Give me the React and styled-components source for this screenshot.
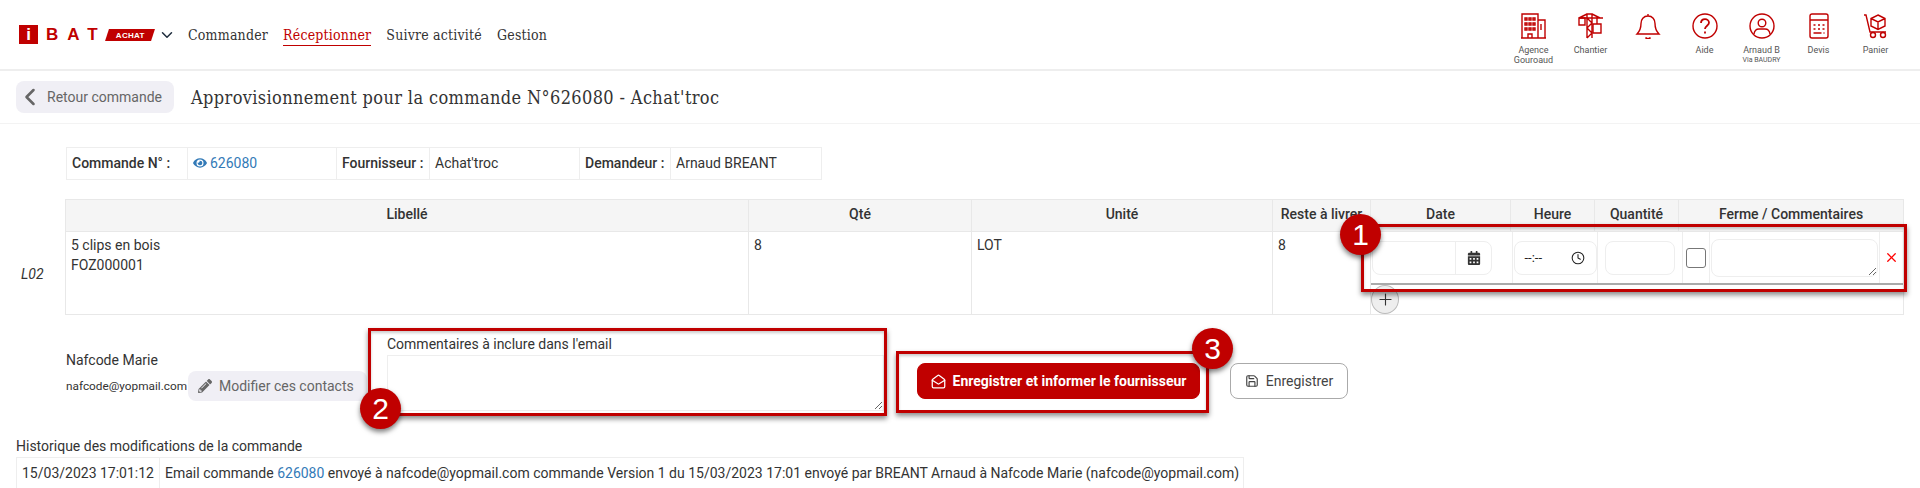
import React from "react";
import styled, { createGlobalStyle } from "styled-components";
import { ChevronDown, ChevronLeft, Clock, MailOpen, Plus, Save, X } from "lucide-react";
import { FaCalendarAlt, FaEye, FaPencilAlt } from "react-icons/fa";

const RED = "#c00000";
const SLAB = '"DejaVu Serif Condensed", "DejaVu Serif", serif';

const GlobalStyle = createGlobalStyle`
  html, body {
    margin: 0;
    height: 488px;
    overflow: hidden;
    background: #fff;
  }
  body {
    font-family: Roboto, "Liberation Sans", sans-serif;
    font-size: 14px;
    color: #333;
  }
  * {
    box-sizing: border-box;
  }
`;

const Page = styled.div`
  position: relative;
  width: 1920px;
  height: 488px;
  overflow: hidden;
`;

const Header = styled.header`
  display: flex;
  align-items: center;
  height: 71px;
  padding: 0 16px 0 19px;
  border-bottom: 2px solid #eee;
`;

const Logo = styled.div`
  display: flex;
  align-items: center;
  width: 169px;
  color: ${RED};
  font-family: "Liberation Sans", sans-serif;
  font-weight: 700;
`;

const LogoSquare = styled.span`
  display: flex;
  align-items: center;
  justify-content: center;
  width: 19px;
  height: 19px;
  background: ${RED};
  color: #fff;
  font-size: 17px;
`;

const LogoLetters = styled.span`
  margin-left: 8px;
  width: 61px;
  font-size: 17px;
  letter-spacing: 9px;
  white-space: nowrap;
`;

const LogoBadge = styled.span`
  display: flex;
  align-items: center;
  justify-content: center;
  width: 46px;
  height: 12px;
  background: ${RED};
  transform: skewX(-18deg);
  color: #fff;
  font-size: 8px;
  letter-spacing: 0.3px;
`;

const LogoBadgeText = styled.span`
  transform: skewX(18deg);
`;

const LogoChevron = styled(ChevronDown)`
  margin-left: 5px;
  color: #1f2d3d;
`;

const Nav = styled.nav`
  display: flex;
  gap: 15px;
  padding-top: 2px;
`;

const NavItem = styled.a`
  font-family: ${SLAB};
  font-size: 14px;
  letter-spacing: 0.2px;
  line-height: 20px;
  color: ${(p) => (p.$active ? RED : "#333")};
  border-bottom: 1px solid ${(p) => (p.$active ? RED : "transparent")};
`;

const Tools = styled.div`
  display: flex;
  align-self: flex-start;
  margin-left: auto;
  padding-top: 13px;
`;

const Tool = styled.div`
  display: flex;
  flex-direction: column;
  align-items: center;
  width: 57px;
  color: #555;
  font-size: 9px;
  line-height: 9.5px;
  text-align: center;
`;

const ToolIcon = styled.svg`
  width: 26px;
  height: 26px;
  margin-bottom: 7px;
  fill: none;
  stroke: ${RED};
  stroke-width: 1.4;
`;

const ToolSub = styled.span`
  display: block;
  font-size: 7px;
`;

const SubHeader = styled.div`
  display: flex;
  align-items: center;
  height: 53px;
  padding: 0 16px;
  border-bottom: 1px solid #f3f3f3;
`;

const GreyButton = styled.button`
  display: flex;
  align-items: center;
  border: 0;
  border-radius: 8px;
  background: #f0eff5;
  color: #666;
  font: 14px Roboto, sans-serif;
  white-space: nowrap;
`;

const BackButton = styled(GreyButton)`
  width: 158px;
  height: 32px;
  padding: 0;
  gap: 3px;
`;

const Title = styled.h1`
  margin: 0 0 0 17px;
  font-family: ${SLAB};
  font-size: 18px;
  font-weight: 400;
  letter-spacing: 0.37px;
  color: #333;
`;

const Content = styled.main`
  padding: 23px 16px 0;
`;

const InfoTable = styled.table`
  margin-left: 50px;
  width: 755px;
  height: 33px;
  border-collapse: collapse;
  table-layout: fixed;
`;

const InfoCell = styled.td`
  padding: 0 5px 2px;
  border: 1px solid #eee;
  font-weight: ${(p) => (p.$label ? 500 : 400)};
  white-space: nowrap;
`;

const Link = styled.a`
  color: #337ab7;
`;

const EyeIcon = styled(FaEye)`
  margin-right: 3px;
  vertical-align: -2px;
`;

const LineRow = styled.div`
  display: flex;
  align-items: flex-end;
  margin-top: 19px;
`;

const LineLabel = styled.div`
  display: flex;
  align-items: center;
  width: 50px;
  height: 83px;
  padding-left: 5px;
  font-style: italic;
`;

const LinesTable = styled.table`
  width: 1838px;
  border-collapse: collapse;
  table-layout: fixed;
`;

const Th = styled.th`
  height: 32px;
  padding: 0 0 3px;
  border: 1px solid #e8e8e8;
  background: #f5f5f5;
  font-weight: 500;
  white-space: nowrap;
`;

const Td = styled.td`
  height: 83px;
  padding: 3px 5px;
  border: 1px solid #e8e8e8;
  line-height: 20px;
  vertical-align: top;
`;

const EntryTd = styled(Td)`
  padding: 0;
`;

const EntryRow = styled.div`
  display: flex;
  height: 53px;
  border-bottom: 2px solid #aaa;
`;

const EntryCell = styled.div`
  display: flex;
  align-items: center;
  justify-content: ${(p) => p.$justify || "flex-start"};
  width: ${(p) => p.$w}px;
  padding-left: ${(p) => p.$pad || 0}px;
  border-left: ${(p) => (p.$first ? "none" : "1px solid #eee")};
`;

const DateGroup = styled.div`
  display: flex;
  width: 120px;
  height: 34px;
  border: 1px solid #eee;
  border-radius: 8px;
`;

const DateInput = styled.div`
  flex: 1;
  border-right: 1px solid #eee;
`;

const DateAddon = styled.div`
  display: flex;
  align-items: center;
  justify-content: center;
  width: 35px;
  color: #333;
`;

const TimeField = styled.div`
  display: flex;
  align-items: center;
  justify-content: space-between;
  width: 83px;
  height: 34px;
  padding: 0 11px 0 10px;
  border: 1px solid #eee;
  border-radius: 8px;
  font-size: 13px;
  color: #222;
`;

const Field = styled.input`
  width: ${(p) => p.$w}px;
  height: 34px;
  padding: 0 8px;
  border: 1px solid #eee;
  border-radius: 8px;
  background: #fff;
`;

const Check = styled.input`
  appearance: none;
  width: 20px;
  height: 20px;
  margin: 0;
  border: 1px solid #777;
  border-radius: 3px;
`;

const Area = styled.textarea`
  display: block;
  width: ${(p) => p.$w}px;
  height: ${(p) => p.$h}px;
  border: 1px solid #eee;
  border-radius: ${(p) => p.$radius || 0}px;
  outline: none;
`;

const RemoveIcon = styled(X)`
  color: #f00;
`;

const AddButton = styled.button`
  display: flex;
  align-items: center;
  justify-content: center;
  width: 28px;
  height: 29px;
  padding: 0;
  border: 1px solid #bbb;
  border-radius: 50%;
  background: #eee;
  color: #333;
`;

const Footer = styled.div`
  display: flex;
  margin-top: 19px;
  height: 77px;
`;

const Contact = styled.div`
  width: 371px;
  padding: 16px 0 0 50px;
`;

const ContactName = styled.div`
  line-height: 20px;
  height: 21px;
`;

const ContactLine = styled.div`
  display: flex;
  align-items: center;
  font-size: 11.8px;
`;

const ContactButton = styled(GreyButton)`
  height: 30px;
  width: 179px;
  margin-left: 1px;
  padding: 0 0 0 10px;
  gap: 7px;
`;

const CommentLabel = styled.div`
  height: 21px;
  line-height: 20px;
`;

const SaveButton = styled.button`
  display: flex;
  align-items: center;
  justify-content: center;
  height: 36px;
  margin: 29px 0 0 ${(p) => p.$gap}px;
  border-radius: 8px;
  font: ${(p) => (p.$primary ? 700 : 400)} 14px Roboto, sans-serif;
  width: ${(p) => p.$w}px;
  gap: 7px;
  padding: 0;
  border: 1px solid ${(p) => (p.$primary ? RED : "#aaa")};
  background: ${(p) => (p.$primary ? RED : "#fff")};
  color: ${(p) => (p.$primary ? "#fff" : "#444")};
`;

const HistoryTitle = styled.div`
  margin-top: 25px;
  height: 21px;
  line-height: 20px;
`;

const HistoryTable = styled.table`
  width: 1228px;
  border-collapse: collapse;
  table-layout: fixed;
`;

const HistoryCell = styled.td`
  height: 33px;
  padding: 0 5px 3px;
  border: 1px solid #eee;
  white-space: nowrap;
`;

const Callout = styled.div`
  position: absolute;
  left: ${(p) => p.$x}px;
  top: ${(p) => p.$y}px;
  width: ${(p) => p.$w}px;
  height: ${(p) => p.$h}px;
  border: 3px solid ${RED};
  box-shadow: 0 3px 5px rgba(0, 0, 0, 0.45), inset 0 2px 3px rgba(0, 0, 0, 0.2);
  pointer-events: none;
`;

const Badge = styled.div`
  position: absolute;
  left: ${(p) => p.$x}px;
  top: ${(p) => p.$y}px;
  display: flex;
  align-items: center;
  justify-content: center;
  width: 41px;
  height: 41px;
  border-radius: 50%;
  background: ${RED};
  box-shadow: 0 3px 5px rgba(0, 0, 0, 0.5);
  color: #fff;
  font: 30px "Liberation Sans", sans-serif;
`;

const tools = [
  {
    label: "Agence",
    second: "Gouroaud",
    icon: (
      <>
        <path d="M1 25V1h16v24M17 7h7v18M0 25h25M7 25v-4h4v4" />
        <path d="M4 5h2v2H4zM8 5h2v2H8zM12 5h2v2h-2zM4 10h2v2H4zM8 10h2v2H8zM12 10h2v2h-2zM4 15h2v2H4zM8 15h2v2H8zM12 15h2v2h-2zM20 11v6" />
      </>
    ),
  },
  {
    label: "Chantier",
    icon: (
      <>
        <path d="M9 25V1h5v24M1 5h24M9 1 1 5M14 1l8 4M9 5l5 5-5 5 5 5-5 5" />
        <path d="M1 5h6v7H1zM19 5v6M15 11h8v9h-8z" />
      </>
    ),
  },
  {
    label: "",
    icon: (
      <path d="M13 1v2M13 3c-4.500 0-7 3.500-7 7.500 0 5-1 7.500-4 10.500h22c-3-3-4-5.500-4-10.500C20 6.500 17.500 3 13 3zM10.500 24.500c1 1.500 4 1.500 5 0" />
    ),
  },
  {
    label: "Aide",
    icon: (
      <>
        <circle cx="13" cy="13" r="12" />
        <path d="M9 10c0-2.500 2-3.800 4-3.800s4 1.300 4 3.500c0 3-4 3-4 6.300M13 18.500v2" strokeWidth="1.8" />
      </>
    ),
  },
  {
    label: "Arnaud B",
    sub: "Via BAUDRY",
    icon: (
      <>
        <circle cx="13" cy="13" r="12" />
        <circle cx="13" cy="10" r="3.800" />
        <path d="M5 21c.5-3.500 3-5 5-5h6c2 0 4.500 1.500 5 5" />
      </>
    ),
  },
  {
    label: "Devis",
    icon: (
      <>
        <rect x="4" y="1" width="18" height="24" rx="2" />
        <path d="M4 7h18M7.500 12h2M12 12h2M16.500 12h2M7.500 16h2M12 16h2M16.500 16h2M7.500 20h8M17.500 20h1" />
      </>
    ),
  },
  {
    label: "Panier",
    icon: (
      <>
        <path d="M1 2h2l4 17h16" />
        <circle cx="10" cy="22" r="2.500" />
        <circle cx="20" cy="22" r="2.500" />
        <path d="M15 2l7 3.500v7.500l-7 3.500-7-3.500V5.500zM8 5.500l7 3.500 7-3.500M15 9v7" />
      </>
    ),
  },
];

const App = () => {
  return (
    <Page>
      <GlobalStyle />
      <Header>
        <Logo>
          <LogoSquare>i</LogoSquare>
          <LogoLetters>BAT</LogoLetters>
          <LogoBadge>
            <LogoBadgeText>ACHAT</LogoBadgeText>
          </LogoBadge>
          <LogoChevron size={18} strokeWidth={2} />
        </Logo>
        <Nav>
          <NavItem>Commander</NavItem>
          <NavItem $active>Réceptionner</NavItem>
          <NavItem>Suivre activité</NavItem>
          <NavItem>Gestion</NavItem>
        </Nav>
        <Tools>
          {tools.map((tool, i) => (
            <Tool key={i}>
              <ToolIcon viewBox="0 0 26 26">{tool.icon}</ToolIcon>
              {tool.label}
              {tool.second && <span>{tool.second}</span>}
              {tool.sub && <ToolSub>{tool.sub}</ToolSub>}
            </Tool>
          ))}
        </Tools>
      </Header>

      <SubHeader>
        <BackButton>
          <ChevronLeft size={28} strokeWidth={2.2} />
          Retour commande
        </BackButton>
        <Title>Approvisionnement pour la commande N°626080 - Achat'troc</Title>
      </SubHeader>

      <Content>
        <InfoTable>
          <colgroup>
            <col width="121" />
            <col width="149" />
            <col width="93" />
            <col width="150" />
            <col width="91" />
            <col width="151" />
          </colgroup>
          <tbody>
            <tr>
              <InfoCell $label>Commande N° :</InfoCell>
              <InfoCell>
                <Link>
                  <EyeIcon size={14} />
                  626080
                </Link>
              </InfoCell>
              <InfoCell $label>Fournisseur :</InfoCell>
              <InfoCell>Achat'troc</InfoCell>
              <InfoCell $label>Demandeur :</InfoCell>
              <InfoCell>Arnaud BREANT</InfoCell>
            </tr>
          </tbody>
        </InfoTable>

        <LineRow>
          <LineLabel>L02</LineLabel>
          <LinesTable>
            <colgroup>
              <col width="683" />
              <col width="223" />
              <col width="301" />
              <col width="98" />
              <col width="140" />
              <col width="84" />
              <col width="84" />
              <col width="225" />
            </colgroup>
            <thead>
              <tr>
                <Th>Libellé</Th>
                <Th>Qté</Th>
                <Th>Unité</Th>
                <Th>Reste à livrer</Th>
                <Th>Date</Th>
                <Th>Heure</Th>
                <Th>Quantité</Th>
                <Th>Ferme / Commentaires</Th>
              </tr>
            </thead>
            <tbody>
              <tr>
                <Td>
                  5 clips en bois
                  <br />
                  FOZ000001
                </Td>
                <Td>8</Td>
                <Td>LOT</Td>
                <Td>8</Td>
                <EntryTd colSpan={4}>
                  <EntryRow>
                    <EntryCell $first $w={141} $pad={1}>
                      <DateGroup>
                        <DateInput />
                        <DateAddon>
                          <FaCalendarAlt size={14} />
                        </DateAddon>
                      </DateGroup>
                    </EntryCell>
                    <EntryCell $w={85} $justify="center">
                      <TimeField>
                        --:--
                        <Clock size={14} strokeWidth={1.8} />
                      </TimeField>
                    </EntryCell>
                    <EntryCell $w={85} $justify="center">
                      <Field type="text" $w={70} />
                    </EntryCell>
                    <EntryCell $w={27} $justify="center">
                      <Check type="checkbox" />
                    </EntryCell>
                    <EntryCell $w={170} $justify="center">
                      <Area $w={167} $h={38} $radius={8} />
                    </EntryCell>
                    <EntryCell $w={24} $justify="center">
                      <RemoveIcon size={15} strokeWidth={2} />
                    </EntryCell>
                  </EntryRow>
                  <AddButton>
                    <Plus size={19} strokeWidth={1.4} />
                  </AddButton>
                </EntryTd>
              </tr>
            </tbody>
          </LinesTable>
        </LineRow>

        <Footer>
          <Contact>
            <ContactName>Nafcode Marie</ContactName>
            <ContactLine>
              nafcode@yopmail.com
              <ContactButton>
                <FaPencilAlt size={14} />
                Modifier ces contacts
              </ContactButton>
            </ContactLine>
          </Contact>
          <div>
            <CommentLabel>Commentaires à inclure dans l'email</CommentLabel>
            <Area $w={497} $h={56} />
          </div>
          <SaveButton $primary $w={283} $gap={33}>
            <MailOpen size={15} />
            Enregistrer et informer le fournisseur
          </SaveButton>
          <SaveButton $w={118} $gap={30}>
            <Save size={14} />
            Enregistrer
          </SaveButton>
        </Footer>

        <HistoryTitle>Historique des modifications de la commande</HistoryTitle>
        <HistoryTable>
          <colgroup>
            <col width="143" />
            <col />
          </colgroup>
          <tbody>
            <tr>
              <HistoryCell>15/03/2023 17:01:12</HistoryCell>
              <HistoryCell>
                Email commande <Link>626080</Link> envoyé à nafcode@yopmail.com commande Version 1 du
                15/03/2023 17:01 envoyé par BREANT Arnaud à Nafcode Marie (nafcode@yopmail.com)
              </HistoryCell>
            </tr>
          </tbody>
        </HistoryTable>
      </Content>

      <Callout $x={1361} $y={224} $w={546} $h={68} />
      <Badge $x={1340} $y={214}>1</Badge>
      <Callout $x={368} $y={328} $w={519} $h={88} />
      <Badge $x={360} $y={388}>2</Badge>
      <Callout $x={896} $y={351} $w={313} $h={62} />
      <Badge $x={1192} $y={328}>3</Badge>
    </Page>
  );
};

export default App;
